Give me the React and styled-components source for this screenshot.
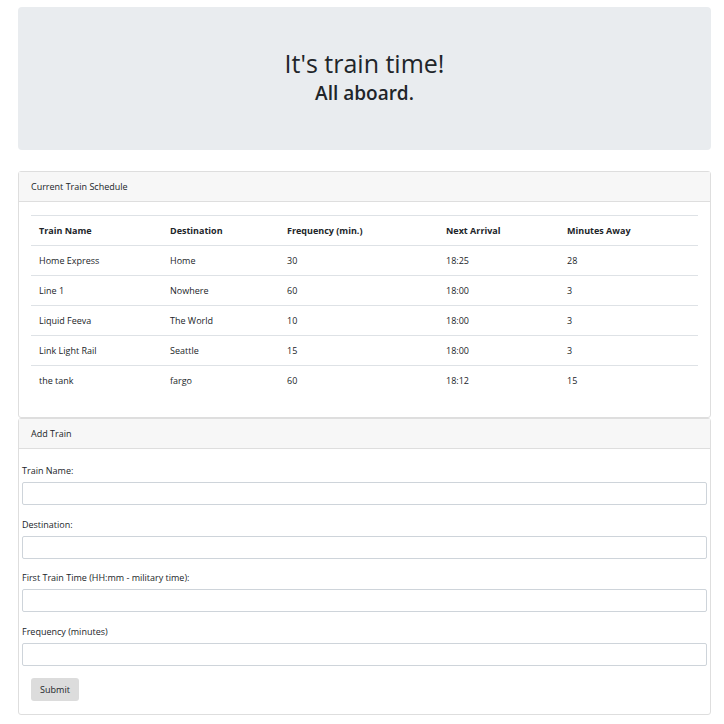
import styled, { createGlobalStyle } from "styled-components";

const GlobalStyle = createGlobalStyle`
  body {
    margin: 0;
    font-family: "Open Sans", "Noto Sans", sans-serif;
    color: #212529;
    background: #fff;
  }
`;

const Container = styled.div`
  padding: 7px 13px 10px 18px;
`;

const Jumbotron = styled.div`
  background-color: #e9ecef;
  border-radius: 4px;
  height: 143px;
  box-sizing: border-box;
  padding-bottom: 4px;
  display: flex;
  flex-direction: column;
  align-items: center;
  justify-content: center;
  margin-bottom: 21px;
`;

const Title = styled.h1`
  margin: 0 0 4px 0;
  font-size: 25px;
  font-weight: 500;
  line-height: 28px;
`;

const Subtitle = styled.h3`
  margin: 0;
  font-size: 19px;
  font-weight: 600;
  line-height: 24px;
`;

const Card = styled.div`
  border: 1px solid #dedede;
  border-radius: 3px;
  background: #fff;
`;

const CardHeader = styled.div`
  height: 29px;
  background: #f7f7f7;
  border-bottom: 1px solid #dedede;
  display: flex;
  align-items: center;
  padding-left: 12px;
  font-size: 9px;
`;

const TableBody = styled.div`
  padding: 13px 12px 22px 12px;
`;

const Table = styled.table`
  width: 100%;
  table-layout: fixed;
  border-collapse: collapse;
  font-size: 9px;
`;

const Th = styled.th`
  box-sizing: border-box;
  text-align: left;
  font-weight: 700;
  height: 30px;
  padding: 0 8px;
  border-top: 1px solid #dee2e6;
  border-bottom: 1px solid #dee2e6;
  width: ${(p) => p.w};
  white-space: nowrap;
`;

const Td = styled.td`
  height: 29px;
  padding: 0 8px;
  border-top: ${(p) => (p.first ? "none" : "1px solid #dee2e6")};
`;

const FormBody = styled.div`
  padding: 15px 3px 13px 3px;
  font-size: 9px;
`;

const Field = styled.div`
  display: flex;
  flex-direction: column;
  margin-bottom: 12.5px;
`;

const Label = styled.label`
  line-height: 14px;
  margin-bottom: 4px;
`;

const Input = styled.input`
  height: 23px;
  box-sizing: border-box;
  border: 1px solid #ced4da;
  border-radius: 2px;
  font-size: 9px;
`;

const Button = styled.button`
  margin-left: 9px;
  width: 48px;
  height: 23px;
  border: none;
  border-radius: 3px;
  background: #dcdcdc;
  font-family: inherit;
  font-size: 9px;
  color: #212529;
`;

const trains = [
  ["Home Express", "Home", "30", "18:25", "28"],
  ["Line 1", "Nowhere", "60", "18:00", "3"],
  ["Liquid Feeva", "The World", "10", "18:00", "3"],
  ["Link Light Rail", "Seattle", "15", "18:00", "3"],
  ["the tank", "fargo", "60", "18:12", "15"],
];

const columns = [
  ["Train Name", "131px"],
  ["Destination", "117px"],
  ["Frequency (min.)", "159px"],
  ["Next Arrival", "121px"],
  ["Minutes Away", "auto"],
];

const fields = [
  "Train Name:",
  "Destination:",
  "First Train Time (HH:mm - military time):",
  "Frequency (minutes)",
];

export default function App() {
  return (
    <Container>
      <GlobalStyle />
      <Jumbotron>
        <Title>It's train time!</Title>
        <Subtitle>All aboard.</Subtitle>
      </Jumbotron>
      <Card>
        <CardHeader>Current Train Schedule</CardHeader>
        <TableBody>
          <Table>
            <thead>
              <tr>
                {columns.map(([c, w]) => (
                  <Th key={c} w={w}>{c}</Th>
                ))}
              </tr>
            </thead>
            <tbody>
              {trains.map((row, i) => (
                <tr key={i}>
                  {row.map((cell, j) => (
                    <Td key={j} first={i === 0}>{cell}</Td>
                  ))}
                </tr>
              ))}
            </tbody>
          </Table>
        </TableBody>
      </Card>
      <Card>
        <CardHeader>Add Train</CardHeader>
        <FormBody>
          {fields.map((f) => (
            <Field key={f}>
              <Label>{f}</Label>
              <Input type="text" />
            </Field>
          ))}
          <Button>Submit</Button>
        </FormBody>
      </Card>
    </Container>
  );
}
